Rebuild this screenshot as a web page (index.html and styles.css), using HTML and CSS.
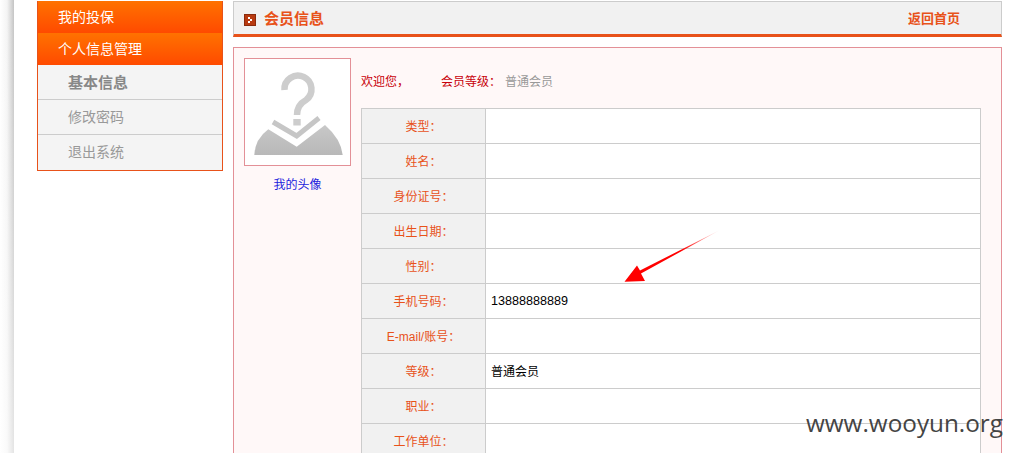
FILE: index.html
```html
<!DOCTYPE html>
<html lang="zh-CN">
<head>
<meta charset="utf-8">
<title>会员信息</title>
<link rel="stylesheet" href="styles.css">
</head>
<body>
<div class="page">
  <div class="shade"></div>
  <aside class="sidebar">
    <div class="menu-head">我的投保</div>
    <div class="menu-head">个人信息管理</div>
    <div class="menu-sub menu-sub-active">基本信息</div>
    <div class="menu-sub">修改密码</div>
    <div class="menu-sub">退出系统</div>
  </aside>
  <main class="main">
    <header class="title-bar">
      <svg class="title-icon" width="12" height="12" viewBox="0 0 12 12">
        <rect x="0.5" y="0.5" width="11" height="11" fill="#b83a10" stroke="#8a2a0c"/>
        <path d="M4 3h2v2H4zM6 5h2v2H6zM4 7h2v2H4z" fill="#fff"/>
      </svg>
      <h1 class="title-text">会员信息</h1>
      <a class="title-link">返回首页</a>
    </header>
    <section class="panel">
      <div class="avatar-col">
        <div class="avatar">
          <svg width="105" height="106" viewBox="0 0 105 106">
            <defs>
              <linearGradient id="hill" x1="0" y1="0" x2="0" y2="1">
                <stop offset="0" stop-color="#c8c8c8"/>
                <stop offset="1" stop-color="#b8b8b8"/>
              </linearGradient>
            </defs>
            <path d="M39.5 31A13.5 13.5 0 1 1 61 41Q52 46 52 56" fill="none" stroke="#cdcdcd" stroke-width="6.5"/>
            <rect x="48.3" y="60" width="7.4" height="6.5" fill="#cdcdcd"/>
            <path d="M9.3 96Q10 80 23.3 70.3L51.7 87.7L80 66Q96 80 97.7 96Z" fill="url(#hill)"/>
            <path d="M28 63L51.7 77L74 59" fill="none" stroke="#c6c6c6" stroke-width="5"/>
          </svg>
        </div>
        <a class="avatar-link">我的头像</a>
      </div>
      <div class="info-col">
        <div class="welcome">
          <span class="welcome-name">欢迎您，</span>
          <span class="welcome-label">会员等级：</span>
          <span class="welcome-value">普通会员</span>
        </div>
        <table class="info-table">
          <tr><th>类型：</th><td></td></tr>
          <tr><th>姓名：</th><td></td></tr>
          <tr><th>身份证号：</th><td></td></tr>
          <tr><th>出生日期：</th><td></td></tr>
          <tr><th>性别：</th><td></td></tr>
          <tr><th>手机号码：</th><td class="digits">13888888889</td></tr>
          <tr><th>E-mail/账号：</th><td></td></tr>
          <tr><th>等级：</th><td>普通会员</td></tr>
          <tr><th>职业：</th><td></td></tr>
          <tr><th>工作单位：</th><td></td></tr>
        </table>
      </div>
    </section>
  </main>
</div>
<svg class="arrow" width="110" height="66" viewBox="0 0 110 66">
  <defs>
    <linearGradient id="fade" x1="1" y1="0" x2="0" y2="1">
      <stop offset="0" stop-color="#ff0000" stop-opacity="0.05"/>
      <stop offset="0.4" stop-color="#ff0000"/>
      <stop offset="1" stop-color="#ff0000"/>
    </linearGradient>
  </defs>
  <path d="M100 5L21 48.5L25 56L4.5 56.7L17 40.5L20 45.5Z" fill="url(#fade)"/>
</svg>
<div class="watermark">www.wooyun.org</div>
</body>
</html>
```

FILE: styles.css
```css
html, body {
  margin: 0;
  height: 453px;
  overflow: hidden;
  background: #fff;
}
body {
  position: relative;
  font: 12px "Liberation Sans", "Noto Sans CJK SC", sans-serif;
  color: #000;
}
.page {
  display: flex;
  align-items: flex-start;
  height: 453px;
  overflow: hidden;
}
.shade {
  flex: none;
  width: 14px;
  height: 453px;
  margin-right: 23px;
  background:
    linear-gradient(to bottom, rgba(255,255,255,0), rgba(255,255,255,.55)),
    linear-gradient(to right, #fff 0, #f4f4f4 50%, #c4c4c4 100%);
}
.sidebar {
  flex: none;
  width: 184px;
  margin-top: 1px;
  border: 1px solid #e8521a;
  border-top: 0;
  background: #f4f4f4;
}
.menu-head {
  height: 32px;
  line-height: 32px;
  padding-left: 20px;
  font-size: 14px;
  color: #fff;
  background: linear-gradient(to bottom, #ff7200, #ff4a00);
}
.menu-sub {
  height: 34px;
  line-height: 35px;
  padding-left: 30px;
  font-size: 14px;
  color: #999;
  border-bottom: 1px solid #ccc;
}
.menu-sub:last-child {
  border-bottom: 0;
  height: 35px;
}
.menu-sub-active {
  font-size: 15px;
  font-weight: bold;
  color: #888;
}
.main {
  flex: none;
  width: 769px;
  margin: 1px 0 0 10px;
}
.title-bar {
  display: flex;
  align-items: center;
  height: 32px;
  padding: 0 41px 0 10px;
  background: #f1f1f1;
  border: 1px solid #ccc;
  border-bottom: 3px solid #e8521a;
}
.title-icon {
  flex: none;
  margin: 4px 8px 0 0;
}
.title-text {
  flex: 1;
  margin: 0 0 2px;
  font-size: 15px;
  font-weight: bold;
  color: #e8521a;
}
.title-link {
  margin-bottom: 1px;
  font-size: 13px;
  font-weight: bold;
  color: #e8521a;
}
.panel {
  display: flex;
  gap: 10px;
  margin-top: 10px;
  padding: 10px;
  background: #fff8f8;
  border: 1px solid #e39097;
}
.avatar-col {
  flex: none;
  width: 107px;
  text-align: center;
}
.avatar {
  display: flex;
  height: 106px;
  background: #fff;
  border: 1px solid #e39097;
}
.avatar-link {
  display: block;
  margin-top: 11px;
  line-height: 17px;
  color: #2222dd;
}
.info-col {
  flex: none;
  width: 620px;
}
.welcome {
  display: flex;
  height: 46px;
  line-height: 48px;
  margin-bottom: 4px;
}
.welcome-name {
  width: 80px;
  color: #c8000a;
}
.welcome-label {
  width: 64px;
  color: #c8000a;
}
.welcome-value {
  color: #999;
}
.info-table {
  width: 620px;
  table-layout: fixed;
  border-collapse: collapse;
  background: #fff;
}
.info-table th,
.info-table td {
  box-sizing: border-box;
  height: 35px;
  padding: 0;
  border: 1px solid #ccc;
}
.info-table th {
  width: 124px;
  padding-bottom: 2px;
  font-weight: normal;
  text-align: center;
  color: #e8521a;
  background: #f1f1f1;
}
.info-table td {
  padding: 0 0 2px 5px;
}
.info-table .digits {
  padding-bottom: 0;
  font-size: 12.6px;
}
.arrow {
  position: absolute;
  left: 620px;
  top: 225px;
}
.watermark {
  position: absolute;
  right: 9px;
  top: 405px;
  font: 24.3px/36px "Open Sans", sans-serif;
  color: #444;
}
```
